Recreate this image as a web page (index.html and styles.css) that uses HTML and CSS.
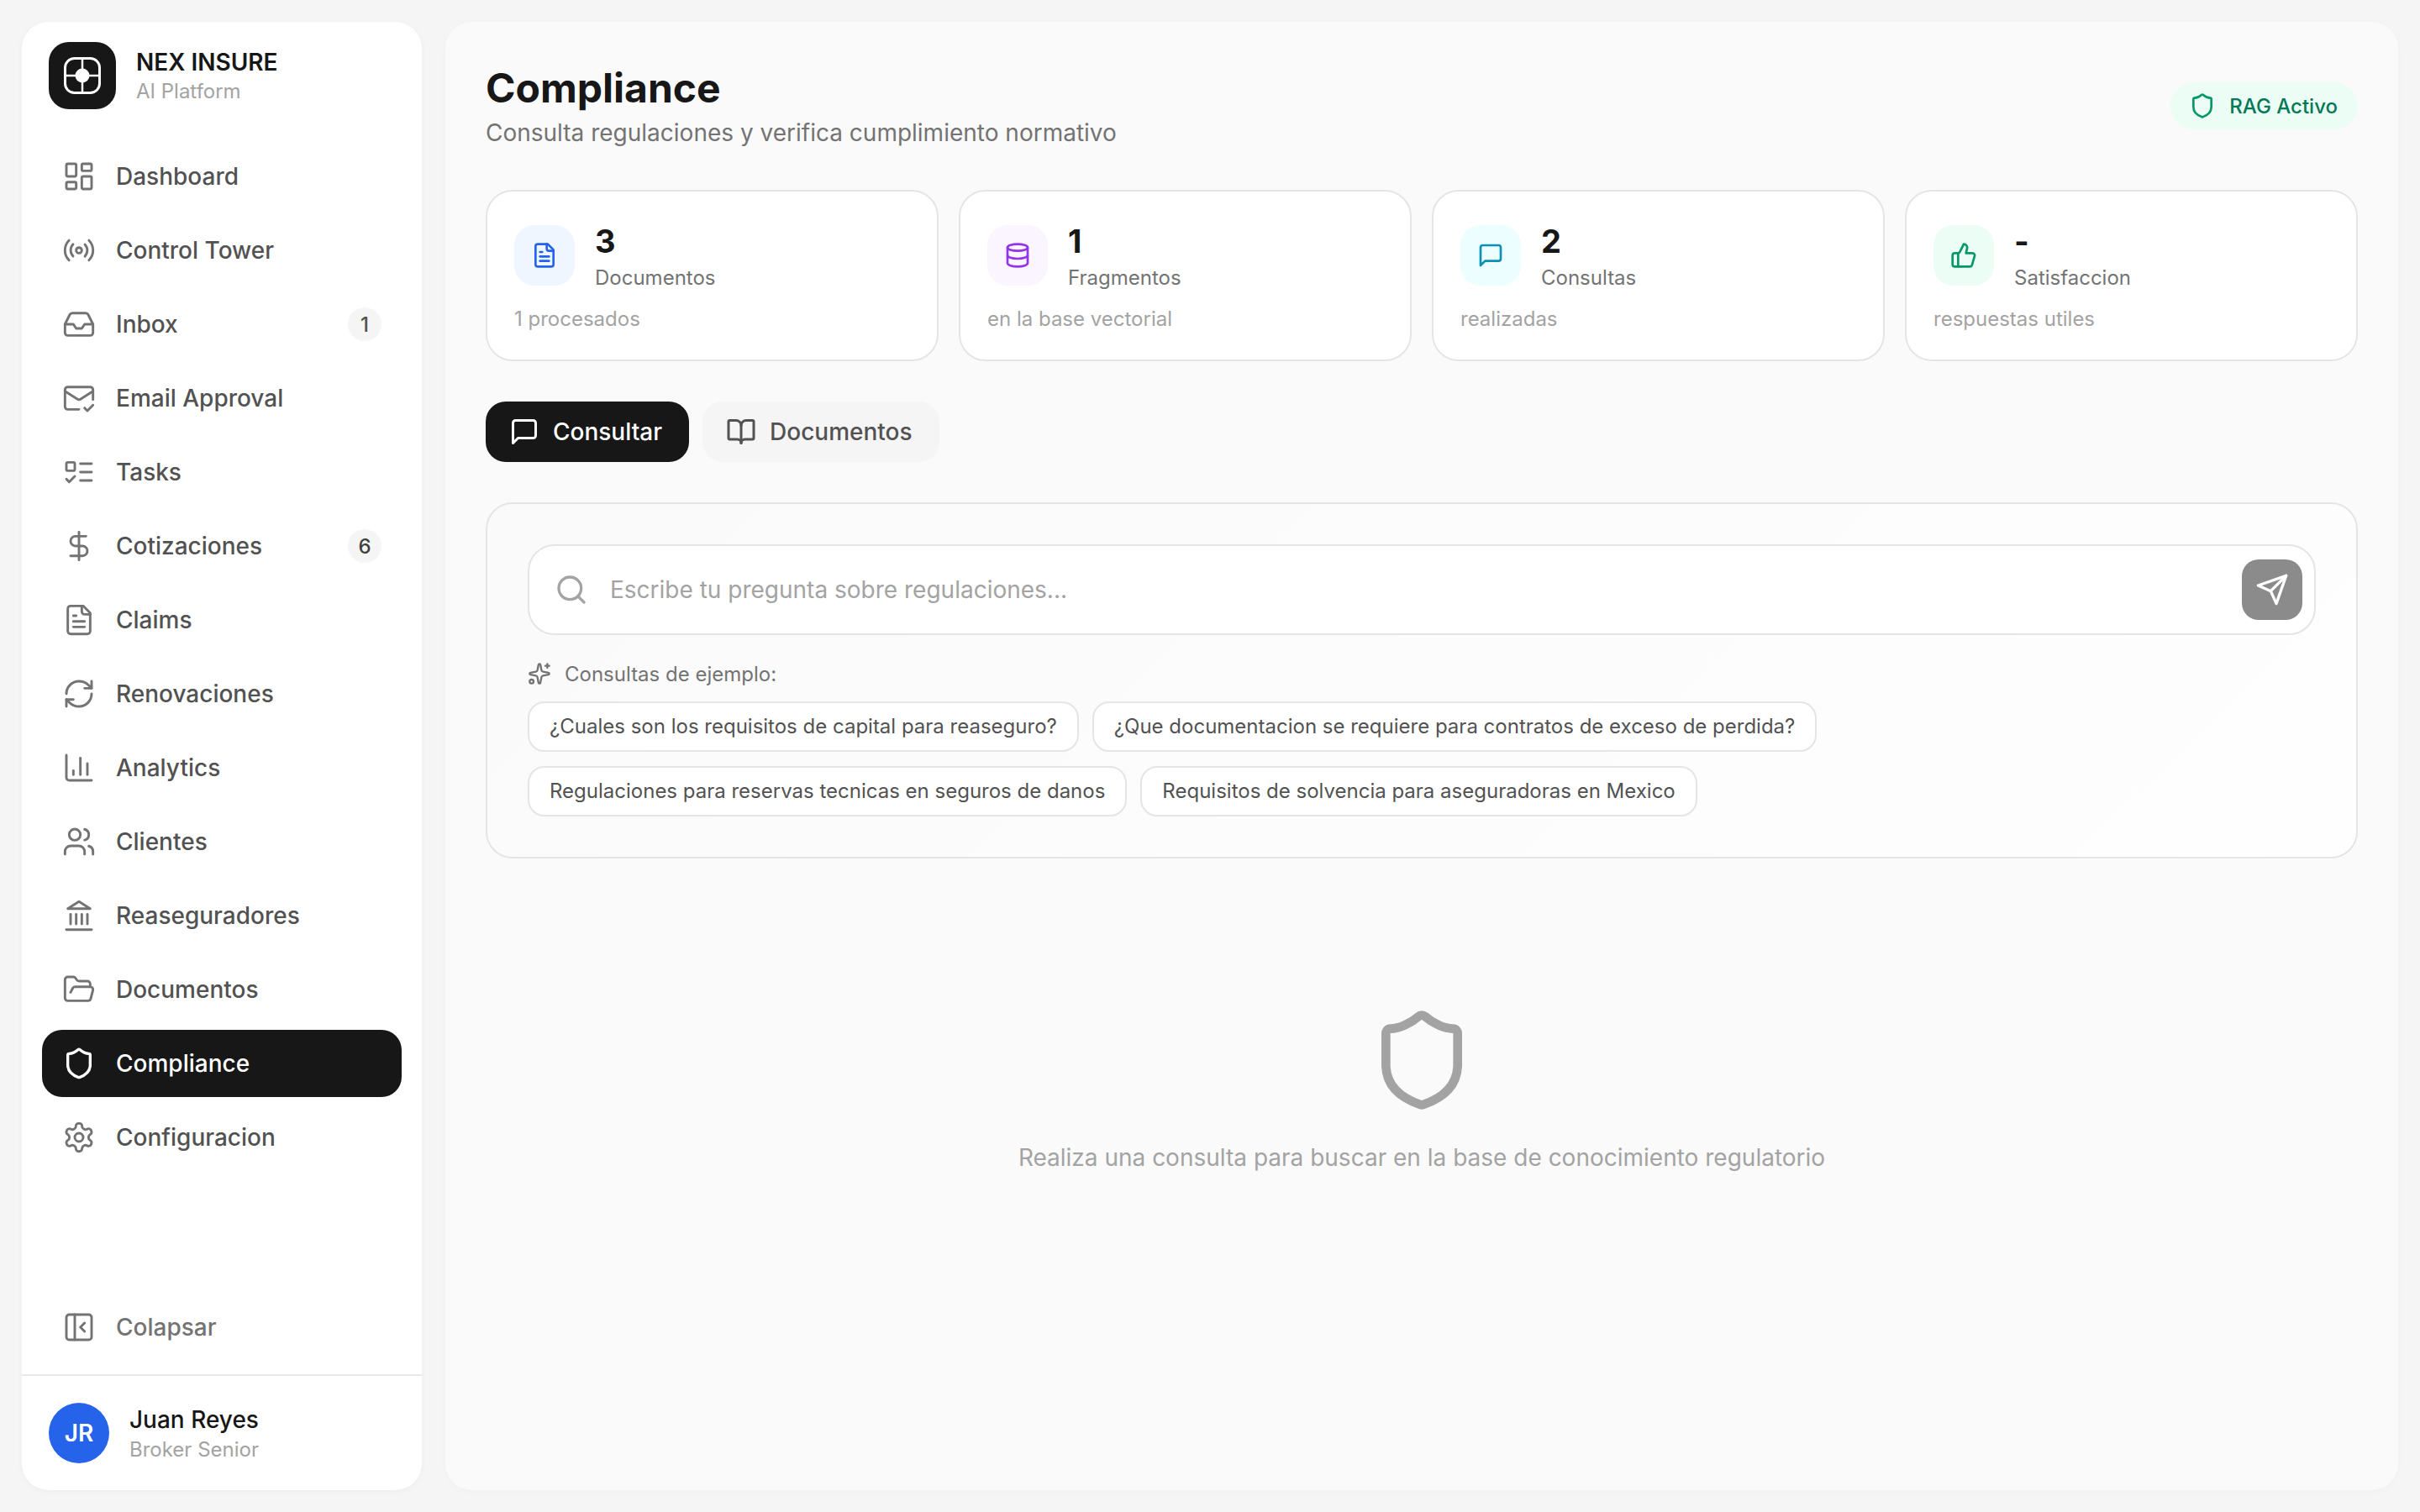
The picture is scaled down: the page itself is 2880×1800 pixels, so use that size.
FILE: index.html
```html
<!DOCTYPE html>
<html lang="es">
<head>
<meta charset="utf-8">
<title>Compliance - NEX INSURE</title>
<link rel="stylesheet" href="styles.css">
</head>
<body>
<div class="app">
  <aside class="sidebar">
    <div class="brand">
      <div class="logo">
        <svg class="logo-mark" viewBox="0 0 48 48">
          <rect class="logo-frame" x="3.5" y="3.5" width="41" height="41" rx="11"/>
          <path class="logo-cross" d="M24 4v40M4 24h40"/>
          <circle class="logo-dot" cx="24" cy="24" r="8.5"/>
        </svg>
      </div>
      <div class="brand-text">
        <div class="brand-name">NEX INSURE</div>
        <div class="brand-sub">AI Platform</div>
      </div>
    </div>
    <nav class="nav">
      <a class="nav-item"><svg class="ico-nav" viewBox="0 0 24 24"><rect width="7" height="9" x="3" y="3" rx="1"/><rect width="7" height="5" x="14" y="3" rx="1"/><rect width="7" height="9" x="14" y="12" rx="1"/><rect width="7" height="5" x="3" y="16" rx="1"/></svg><span class="nav-label">Dashboard</span></a>
      <a class="nav-item"><svg class="ico-nav" viewBox="0 0 24 24"><path d="M4.9 19.1C1 15.2 1 8.8 4.9 4.9"/><path d="M7.8 16.2c-2.3-2.3-2.3-6.1 0-8.5"/><circle cx="12" cy="12" r="2"/><path d="M16.2 7.8c2.3 2.3 2.3 6.1 0 8.5"/><path d="M19.1 4.9C23 8.8 23 15.1 19.1 19"/></svg><span class="nav-label">Control Tower</span></a>
      <a class="nav-item"><svg class="ico-nav" viewBox="0 0 24 24"><polyline points="22 12 16 12 14 15 10 15 8 12 2 12"/><path d="M5.45 5.11 2 12v6a2 2 0 0 0 2 2h16a2 2 0 0 0 2-2v-6l-3.45-6.89A2 2 0 0 0 16.76 4H7.24a2 2 0 0 0-1.79 1.11z"/></svg><span class="nav-label">Inbox</span><span class="count">1</span></a>
      <a class="nav-item"><svg class="ico-nav" viewBox="0 0 24 24"><path d="M22 13V6a2 2 0 0 0-2-2H4a2 2 0 0 0-2 2v12c0 1.1.9 2 2 2h8"/><path d="m22 7-8.97 5.7a1.94 1.94 0 0 1-2.06 0L2 7"/><path d="m16 19 2 2 4-4"/></svg><span class="nav-label">Email Approval</span></a>
      <a class="nav-item"><svg class="ico-nav" viewBox="0 0 24 24"><rect x="3" y="5" width="6" height="6" rx="1"/><path d="m3 17 2 2 4-4"/><path d="M13 6h8"/><path d="M13 12h8"/><path d="M13 18h8"/></svg><span class="nav-label">Tasks</span></a>
      <a class="nav-item"><svg class="ico-nav" viewBox="0 0 24 24"><line x1="12" x2="12" y1="2" y2="22"/><path d="M17 5H9.5a3.5 3.5 0 0 0 0 7h5a3.5 3.5 0 0 1 0 7H6"/></svg><span class="nav-label">Cotizaciones</span><span class="count count-dark">6</span></a>
      <a class="nav-item"><svg class="ico-nav" viewBox="0 0 24 24"><path d="M15 2H6a2 2 0 0 0-2 2v16a2 2 0 0 0 2 2h12a2 2 0 0 0 2-2V7Z"/><path d="M14 2v4a2 2 0 0 0 2 2h4"/><path d="M10 9H8"/><path d="M16 13H8"/><path d="M16 17H8"/></svg><span class="nav-label">Claims</span></a>
      <a class="nav-item"><svg class="ico-nav" viewBox="0 0 24 24"><path d="M3 12a9 9 0 0 1 9-9 9.75 9.75 0 0 1 6.74 2.74L21 8"/><path d="M21 3v5h-5"/><path d="M21 12a9 9 0 0 1-9 9 9.75 9.75 0 0 1-6.74-2.74L3 16"/><path d="M8 16H3v5"/></svg><span class="nav-label">Renovaciones</span></a>
      <a class="nav-item"><svg class="ico-nav" viewBox="0 0 24 24"><path d="M3 3v16a2 2 0 0 0 2 2h16"/><path d="M18 17V9"/><path d="M13 17V5"/><path d="M8 17v-3"/></svg><span class="nav-label">Analytics</span></a>
      <a class="nav-item"><svg class="ico-nav" viewBox="0 0 24 24"><path d="M16 21v-2a4 4 0 0 0-4-4H6a4 4 0 0 0-4 4v2"/><circle cx="9" cy="7" r="4"/><path d="M22 21v-2a4 4 0 0 0-3-3.87"/><path d="M16 3.13a4 4 0 0 1 0 7.75"/></svg><span class="nav-label">Clientes</span></a>
      <a class="nav-item"><svg class="ico-nav" viewBox="0 0 24 24"><line x1="3" x2="21" y1="22" y2="22"/><line x1="6" x2="6" y1="18" y2="11"/><line x1="10" x2="10" y1="18" y2="11"/><line x1="14" x2="14" y1="18" y2="11"/><line x1="18" x2="18" y1="18" y2="11"/><polygon points="12 2 20 7 4 7"/></svg><span class="nav-label">Reaseguradores</span></a>
      <a class="nav-item"><svg class="ico-nav" viewBox="0 0 24 24"><path d="m6 14 1.5-2.9A2 2 0 0 1 9.24 10H20a2 2 0 0 1 1.94 2.5l-1.54 6a2 2 0 0 1-1.95 1.5H4a2 2 0 0 1-2-2V5a2 2 0 0 1 2-2h3.9a2 2 0 0 1 1.69.9l.81 1.2a2 2 0 0 0 1.67.9H18a2 2 0 0 1 2 2v2"/></svg><span class="nav-label">Documentos</span></a>
      <a class="nav-item nav-active"><svg class="ico-nav" viewBox="0 0 24 24"><path d="M20 13c0 5-3.5 7.5-7.66 8.95a1 1 0 0 1-.67-.01C7.5 20.5 4 18 4 13V6a1 1 0 0 1 1-1c2 0 4.5-1.2 6.24-2.72a1.17 1.17 0 0 1 1.52 0C14.51 3.81 17 5 19 5a1 1 0 0 1 1 1z"/></svg><span class="nav-label">Compliance</span></a>
      <a class="nav-item"><svg class="ico-nav" viewBox="0 0 24 24"><path d="M12.22 2h-.44a2 2 0 0 0-2 2v.18a2 2 0 0 1-1 1.73l-.43.25a2 2 0 0 1-2 0l-.15-.08a2 2 0 0 0-2.73.73l-.22.38a2 2 0 0 0 .73 2.73l.15.1a2 2 0 0 1 1 1.72v.51a2 2 0 0 1-1 1.74l-.15.09a2 2 0 0 0-.73 2.73l.22.38a2 2 0 0 0 2.73.73l.15-.08a2 2 0 0 1 2 0l.43.25a2 2 0 0 1 1 1.73V20a2 2 0 0 0 2 2h.44a2 2 0 0 0 2-2v-.18a2 2 0 0 1 1-1.73l.43-.25a2 2 0 0 1 2 0l.15.08a2 2 0 0 0 2.73-.73l.22-.39a2 2 0 0 0-.73-2.73l-.15-.08a2 2 0 0 1-1-1.74v-.5a2 2 0 0 1 1-1.74l.15-.09a2 2 0 0 0 .73-2.73l-.22-.38a2 2 0 0 0-2.73-.73l-.15.08a2 2 0 0 1-2 0l-.43-.25a2 2 0 0 1-1-1.73V4a2 2 0 0 0-2-2z"/><circle cx="12" cy="12" r="3"/></svg><span class="nav-label">Configuracion</span></a>
    </nav>
    <div class="collapse-wrap">
      <a class="nav-item nav-muted"><svg class="ico-nav" viewBox="0 0 24 24"><rect width="18" height="18" x="3" y="3" rx="2"/><path d="M9 3v18"/><path d="m16 15-3-3 3-3"/></svg><span class="nav-label">Colapsar</span></a>
    </div>
    <div class="user">
      <div class="avatar">JR</div>
      <div class="user-text">
        <div class="user-name">Juan Reyes</div>
        <div class="user-role">Broker Senior</div>
      </div>
    </div>
  </aside>

  <main class="main">
    <header class="page-head">
      <div>
        <h1 class="page-title">Compliance</h1>
        <p class="page-sub">Consulta regulaciones y verifica cumplimiento normativo</p>
      </div>
      <div class="rag">
        <svg class="ico-rag" viewBox="0 0 24 24"><path d="M20 13c0 5-3.5 7.5-7.66 8.95a1 1 0 0 1-.67-.01C7.5 20.5 4 18 4 13V6a1 1 0 0 1 1-1c2 0 4.5-1.2 6.24-2.72a1.17 1.17 0 0 1 1.52 0C14.51 3.81 17 5 19 5a1 1 0 0 1 1 1z"/></svg>
        <span>RAG Activo</span>
      </div>
    </header>

    <section class="stats">
      <div class="stat">
        <div class="stat-top">
          <div class="stat-ico tint-blue"><svg class="ico-stat" viewBox="0 0 24 24"><path d="M15 2H6a2 2 0 0 0-2 2v16a2 2 0 0 0 2 2h12a2 2 0 0 0 2-2V7Z"/><path d="M14 2v4a2 2 0 0 0 2 2h4"/><path d="M10 9H8"/><path d="M16 13H8"/><path d="M16 17H8"/></svg></div>
          <div><div class="stat-num">3</div><div class="stat-label">Documentos</div></div>
        </div>
        <div class="stat-note">1 procesados</div>
      </div>
      <div class="stat">
        <div class="stat-top">
          <div class="stat-ico tint-purple"><svg class="ico-stat" viewBox="0 0 24 24"><ellipse cx="12" cy="5" rx="9" ry="3"/><path d="M3 5V19A9 3 0 0 0 21 19V5"/><path d="M3 12A9 3 0 0 0 21 12"/></svg></div>
          <div><div class="stat-num">1</div><div class="stat-label">Fragmentos</div></div>
        </div>
        <div class="stat-note">en la base vectorial</div>
      </div>
      <div class="stat">
        <div class="stat-top">
          <div class="stat-ico tint-cyan"><svg class="ico-stat" viewBox="0 0 24 24"><path d="M21 15a2 2 0 0 1-2 2H7l-4 4V5a2 2 0 0 1 2-2h14a2 2 0 0 1 2 2z"/></svg></div>
          <div><div class="stat-num">2</div><div class="stat-label">Consultas</div></div>
        </div>
        <div class="stat-note">realizadas</div>
      </div>
      <div class="stat">
        <div class="stat-top">
          <div class="stat-ico tint-green"><svg class="ico-stat" viewBox="0 0 24 24"><path d="M7 10v12"/><path d="M15 5.88 14 10h5.83a2 2 0 0 1 1.92 2.56l-2.33 8A2 2 0 0 1 17.5 22H4a2 2 0 0 1-2-2v-8a2 2 0 0 1 2-2h2.76a2 2 0 0 0 1.79-1.11L12 2a3.13 3.13 0 0 1 3 3.88Z"/></svg></div>
          <div><div class="stat-num">-</div><div class="stat-label">Satisfaccion</div></div>
        </div>
        <div class="stat-note">respuestas utiles</div>
      </div>
    </section>

    <div class="tabs">
      <button class="tab tab-active"><svg class="ico-tab" viewBox="0 0 24 24"><path d="M21 15a2 2 0 0 1-2 2H7l-4 4V5a2 2 0 0 1 2-2h14a2 2 0 0 1 2 2z"/></svg>Consultar</button>
      <button class="tab"><svg class="ico-tab" viewBox="0 0 24 24"><path d="M12 7v14"/><path d="M3 18a1 1 0 0 1-1-1V4a1 1 0 0 1 1-1h5a4 4 0 0 1 4 4 4 4 0 0 1 4-4h5a1 1 0 0 1 1 1v13a1 1 0 0 1-1 1h-6a3 3 0 0 0-3 3 3 3 0 0 0-3-3z"/></svg>Documentos</button>
    </div>

    <section class="panel">
      <div class="ask">
        <svg class="ico-search" viewBox="0 0 24 24"><circle cx="11" cy="11" r="8"/><path d="m21 21-4.3-4.3"/></svg>
        <span class="ask-text">Escribe tu pregunta sobre regulaciones...</span>
        <button class="send"><svg class="ico-send" viewBox="0 0 24 24"><path d="m22 2-7 20-4-9-9-4Z"/><path d="M22 2 11 13"/></svg></button>
      </div>
      <div class="examples-head">
        <svg class="ico-spark" viewBox="0 0 24 24"><path d="M11.017 2.814a1 1 0 0 1 1.966 0l1.051 5.558a2 2 0 0 0 1.594 1.594l5.558 1.051a1 1 0 0 1 0 1.966l-5.558 1.051a2 2 0 0 0-1.594 1.594l-1.051 5.558a1 1 0 0 1-1.966 0l-1.051-5.558a2 2 0 0 0-1.594-1.594l-5.558-1.051a1 1 0 0 1 0-1.966l5.558-1.051a2 2 0 0 0 1.594-1.594z"/><path d="M20 2v4"/><path d="M22 4h-4"/><circle cx="4" cy="20" r="2"/></svg>
        <span>Consultas de ejemplo:</span>
      </div>
      <div class="chips">
        <button class="chip">¿Cuales son los requisitos de capital para reaseguro?</button>
        <button class="chip">¿Que documentacion se requiere para contratos de exceso de perdida?</button>
        <button class="chip">Regulaciones para reservas tecnicas en seguros de danos</button>
        <button class="chip">Requisitos de solvencia para aseguradoras en Mexico</button>
      </div>
    </section>

    <section class="empty">
      <svg class="ico-empty" viewBox="0 0 24 24"><path d="M20 13c0 5-3.5 7.5-7.66 8.95a1 1 0 0 1-.67-.01C7.5 20.5 4 18 4 13V6a1 1 0 0 1 1-1c2 0 4.5-1.2 6.24-2.72a1.17 1.17 0 0 1 1.52 0C14.51 3.81 17 5 19 5a1 1 0 0 1 1 1z"/></svg>
      <p class="empty-text">Realiza una consulta para buscar en la base de conocimiento regulatorio</p>
    </section>
  </main>
</div>
</body>
</html>
```

FILE: styles.css
```css
* { box-sizing: border-box; }
html, body { margin: 0; padding: 0; }
body {
  width: 2880px;
  height: 1800px;
  overflow: hidden;
  background: #f5f5f5;
  font-family: "Inter", "Liberation Sans", sans-serif;
  color: #171717;
}
svg {
  fill: none;
  stroke: currentColor;
  stroke-linecap: round;
  stroke-linejoin: round;
  stroke-width: 2;
  flex: none;
  display: block;
}
button { font-family: inherit; border: 0; cursor: pointer; }
h1, p { margin: 0; }

.app {
  display: flex;
  gap: 28px;
  height: 1800px;
  padding: 26px;
}

/* Sidebar */
.sidebar {
  width: 476px;
  flex: none;
  display: flex;
  flex-direction: column;
  background: #fff;
  border-radius: 32px;
  box-shadow: 0 2px 8px rgba(0, 0, 0, .035);
}
.brand {
  display: flex;
  align-items: center;
  gap: 24px;
  padding: 24px 32px 40px;
}
.logo {
  width: 80px;
  height: 80px;
  border-radius: 24px;
  background: #171717;
  display: flex;
  align-items: center;
  justify-content: center;
  color: #fff;
}
.logo-mark { width: 48px; height: 48px; }
.logo-frame { stroke-width: 3; }
.logo-cross { stroke-width: 2.5; stroke-linecap: butt; }
.logo-dot { fill: #fff; stroke: none; }
.brand-name { font-size: 28px; line-height: 38px; font-weight: 600; color: #171717; }
.brand-sub { font-size: 24px; line-height: 32px; color: #a3a3a3; }

.nav {
  flex: 1;
  display: flex;
  flex-direction: column;
  gap: 8px;
  padding: 0 24px;
}
.nav-item {
  display: flex;
  align-items: center;
  gap: 24px;
  height: 80px;
  padding: 0 24px;
  border-radius: 24px;
  font-size: 28px;
  font-weight: 500;
  color: #525252;
}
.ico-nav { width: 40px; height: 40px; color: #737373; stroke-width: 1.75; }
.nav-label { flex: 1; }
.nav-active { background: #171717; color: #fff; }
.nav-active .ico-nav { color: #fff; stroke-width: 2; }
.nav-muted { color: #737373; }
.count {
  width: 40px;
  height: 40px;
  border-radius: 50%;
  background: #f5f5f5;
  display: flex;
  align-items: center;
  justify-content: center;
  font-size: 24px;
  color: #525252;
}
.count-dark { color: #404040; }
.collapse-wrap { padding: 0 24px 16px; }
.user {
  display: flex;
  align-items: center;
  gap: 24px;
  padding: 32px;
  border-top: 2px solid #e9e9e9;
}
.avatar {
  width: 72px;
  height: 72px;
  border-radius: 50%;
  background: #2563eb;
  color: #fff;
  display: flex;
  align-items: center;
  justify-content: center;
  font-size: 28px;
  font-weight: 600;
}
.user-text { padding-top: 2px; }
.user-name { font-size: 28px; line-height: 36px; font-weight: 500; color: #171717; }
.user-role { margin-top: 2px; font-size: 24px; line-height: 32px; color: #a3a3a3; }

/* Main */
.main {
  flex: 1;
  min-width: 0;
  padding: 48px;
  background: #fafafa;
  border-radius: 32px;
  box-shadow: 0 2px 8px rgba(0, 0, 0, .02);
}
.page-head {
  display: flex;
  align-items: center;
  justify-content: space-between;
  margin-bottom: 48px;
}
.page-title { font-size: 48px; line-height: 62px; font-weight: 700; color: #171717; }
.page-sub { margin-top: 2px; font-size: 28px; line-height: 40px; color: #737373; }
.rag {
  display: flex;
  align-items: center;
  gap: 16px;
  height: 56px;
  padding: 0 24px 0 22px;
  border-radius: 28px;
  background: #ecfdf5;
  font-size: 24px;
  font-weight: 500;
  color: #047857;
}
.ico-rag { width: 32px; height: 32px; color: #059669; }

.stats {
  display: grid;
  grid-template-columns: repeat(4, 1fr);
  gap: 24px;
  margin-bottom: 48px;
}
.stat {
  padding: 32px;
  background: #fff;
  border: 2px solid #e5e5e5;
  border-radius: 32px;
}
.stat-top { display: flex; align-items: center; gap: 24px; }
.stat-ico {
  width: 72px;
  height: 72px;
  border-radius: 24px;
  display: flex;
  align-items: center;
  justify-content: center;
}
.ico-stat { width: 32px; height: 32px; }
.tint-blue { background: #eff6ff; color: #2563eb; }
.tint-purple { background: #faf5ff; color: #9333ea; }
.tint-cyan { background: #ecfeff; color: #0891b2; }
.tint-green { background: #ecfdf5; color: #059669; }
.stat-num { font-size: 38px; line-height: 54px; font-weight: 700; color: #171717; }
.stat-label { font-size: 24px; line-height: 34px; color: #737373; }
.stat-note { margin-top: 16px; font-size: 24px; line-height: 32px; color: #a3a3a3; }

.tabs { display: flex; gap: 16px; margin-bottom: 48px; }
.tab {
  display: flex;
  align-items: center;
  gap: 16px;
  height: 72px;
  padding: 0 32px 0 28px;
  border-radius: 24px;
  background: #f5f5f5;
  font-size: 28px;
  font-weight: 500;
  color: #525252;
}
.tab-active { background: #171717; color: #fff; }
.ico-tab { width: 36px; height: 36px; }

.panel {
  padding: 48px;
  border: 2px solid #e5e5e5;
  border-radius: 32px;
  background: linear-gradient(135deg, #fafafa, #fefefe);
}
.ask {
  display: flex;
  align-items: center;
  height: 108px;
  padding: 0 14px 0 30px;
  background: #fff;
  border: 2px solid #e5e5e5;
  border-radius: 32px;
}
.ico-search { width: 40px; height: 40px; color: #a3a3a3; }
.ask-text { flex: 1; margin-left: 26px; font-size: 28px; color: #a3a3a3; }
.send {
  width: 72px;
  height: 72px;
  padding: 0;
  border-radius: 20px;
  background: #8b8b8b;
  color: #fff;
  display: flex;
  align-items: center;
  justify-content: center;
}
.ico-send { width: 40px; height: 40px; }
.examples-head {
  display: flex;
  align-items: center;
  gap: 16px;
  margin-top: 30px;
  height: 32px;
  font-size: 24px;
  color: #737373;
}
.ico-spark { width: 28px; height: 28px; }
.chips {
  display: flex;
  flex-wrap: wrap;
  gap: 17px 16px;
  margin-top: 17px;
  max-width: 1800px;
}
.chip {
  height: 60px;
  padding: 0 24px 1px;
  background: #fff;
  border: 2px solid #e5e5e5;
  border-radius: 20px;
  font-size: 24px;
  color: #525252;
}

.empty {
  display: flex;
  flex-direction: column;
  align-items: center;
  gap: 30px;
  padding-top: 176px;
}
.ico-empty { width: 128px; height: 128px; color: #a3a3a3; }
.empty-text { font-size: 28px; line-height: 44px; color: #a3a3a3; }
```
